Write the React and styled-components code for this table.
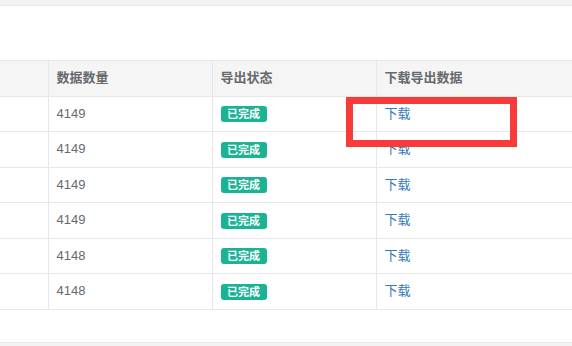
import React from 'react';
import styled, { createGlobalStyle } from 'styled-components';

const GlobalStyle = createGlobalStyle`
  html, body {
    margin: 0;
    padding: 0;
    background: #f3f3f4;
    font-family: "Liberation Sans", Arial, "Noto Sans CJK SC", sans-serif;
    overflow: hidden;
  }
`;

const Page = styled.div`
  position: relative;
  width: 572px;
  height: 346px;
  background: #f3f3f4;
`;

const Panel = styled.div`
  margin-top: 5px;
  border-top: 1px solid #e7eaec;
  border-bottom: 1px solid #e7eaec;
  background: #fff;
  height: 338px;
  padding-top: 54px;
  box-sizing: border-box;
`;

const Table = styled.table`
  width: 572px;
  border-collapse: collapse;
  table-layout: fixed;
  font-size: 13px;
  line-height: 1.42857;
  color: #676a6c;
`;

const Col = styled.col`
  width: ${(p) => p.w || 'auto'};
`;

const Th = styled.th`
  text-align: left;
  font-weight: 600;
  padding: 8px;
  background: #f5f5f6;
  border: 1px solid #e7e7e7;
  color: #676a6c;
  &:first-child { border-left: none; }
  &:last-child { border-right: none; }
`;

const Td = styled.td`
  padding: 8px;
  border: 1px solid #e7e7e7;
  vertical-align: middle;
  white-space: nowrap;
  &:first-child { border-left: none; }
  &:last-child { border-right: none; }
`;

const Badge = styled.span`
  display: inline-block;
  background: #1ab394;
  color: #fff;
  font-size: 11px;
  font-weight: 700;
  line-height: 16px;
  height: 16px;
  padding: 0 6.5px;
  border-radius: 3px;
  vertical-align: middle;
`;

const Link = styled.a`
  color: #337ab7;
  text-decoration: none;
  cursor: pointer;
`;

const Highlight = styled.div`
  position: absolute;
  left: 346px;
  top: 92px;
  width: 171px;
  height: 50px;
  box-sizing: border-box;
  border: 7px solid #f83a3a;
  pointer-events: none;
`;

const rows = [4149, 4149, 4149, 4149, 4148, 4148];

export default function App() {
  return (
    <Page>
      <GlobalStyle />
      <Panel>
        <Table>
          <colgroup>
            <Col w="48px" />
            <Col w="164px" />
            <Col w="164px" />
            <Col />
          </colgroup>
          <thead>
            <tr>
              <Th></Th>
              <Th>数据数量</Th>
              <Th>导出状态</Th>
              <Th>下载导出数据</Th>
            </tr>
          </thead>
          <tbody>
            {rows.map((n, i) => (
              <tr key={i}>
                <Td></Td>
                <Td>{n}</Td>
                <Td>
                  <Badge>已完成</Badge>
                </Td>
                <Td>
                  <Link>下载</Link>
                </Td>
              </tr>
            ))}
          </tbody>
        </Table>
      </Panel>
      <Highlight />
    </Page>
  );
}
